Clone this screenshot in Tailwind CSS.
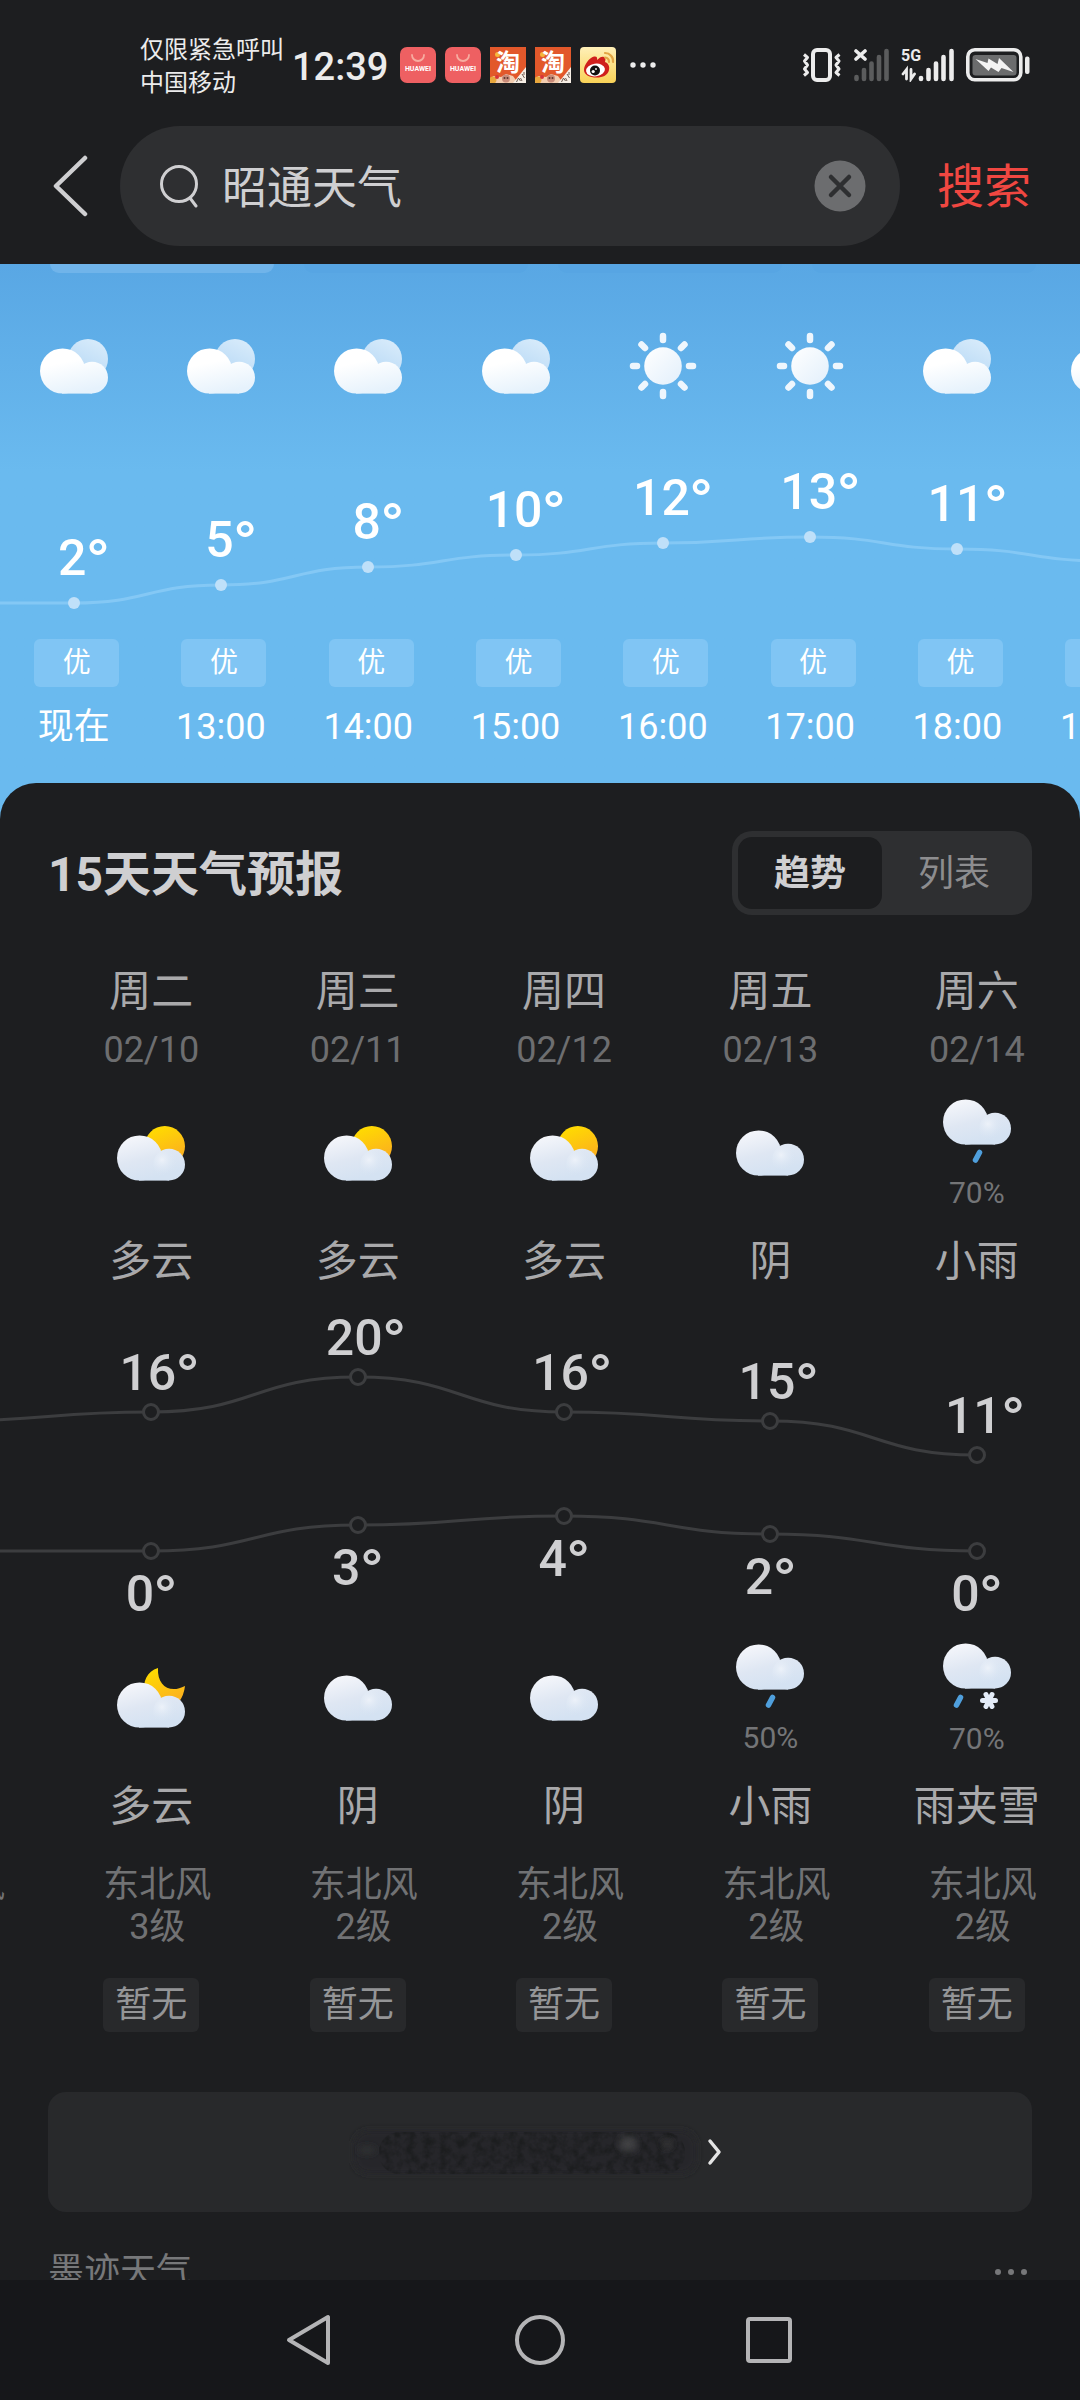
<!DOCTYPE html>
<html lang="zh-CN">
<head>
    <meta charset="UTF-8">
    <meta name="viewport" content="width=device-width, initial-scale=1.0">
    <title>昭通天气</title>
    <script src="https://cdn.jsdelivr.net/npm/@tailwindcss/browser@4"></script>
</head>
<body class="bg-[#1d1e20] text-[#cfcfd1] font-['Roboto','Noto_Sans_CJK_SC',sans-serif]">

    <!-- Icon sprite -->
    <svg class="absolute size-0" aria-hidden="true">
        <defs>
            <linearGradient id="white-cloud" gradientUnits="userSpaceOnUse" x1="20" y1="10" x2="30" y2="55">
                <stop offset="0.3" stop-color="#ffffff"/><stop offset="1" stop-color="#e6f2fc"/>
            </linearGradient>
            <linearGradient id="back-cloud" x1="0.8" y1="0" x2="0.3" y2="1">
                <stop offset="0" stop-color="#d9ecfb"/><stop offset="1" stop-color="#b4d7f5"/>
            </linearGradient>
            <linearGradient id="sun-white" x1="0" y1="0" x2="1" y2="1">
                <stop offset="0" stop-color="#ffffff"/><stop offset="1" stop-color="#e2effb"/>
            </linearGradient>
            <linearGradient id="grey-cloud" gradientUnits="userSpaceOnUse" x1="18" y1="8" x2="30" y2="54">
                <stop offset="0" stop-color="#f6f7fb"/><stop offset="0.55" stop-color="#dfe7f3"/><stop offset="1" stop-color="#d4e2f2"/>
            </linearGradient>
            <radialGradient id="cloud-glow" gradientUnits="userSpaceOnUse" cx="45" cy="34" r="16">
                <stop offset="0" stop-color="#f1f5fb" stop-opacity="0.8"/><stop offset="1" stop-color="#d6e3f2" stop-opacity="0"/>
            </radialGradient>
            <linearGradient id="sun-yellow" x1="0.3" y1="0" x2="0.7" y2="1">
                <stop offset="0" stop-color="#ffdc00"/><stop offset="1" stop-color="#fba824"/>
            </linearGradient>
        </defs>
        <symbol id="cloud-shape" viewBox="0 0 68 46">
            <g transform="translate(0 -9)" fill="url(#grey-cloud)">
                <circle cx="22.6" cy="32" r="22.6"/>
                <rect x="22" y="32" width="30" height="22.6"/>
                <circle cx="52.1" cy="38.6" r="15.9"/>
                <circle cx="52.1" cy="38.6" r="15.9" fill="url(#cloud-glow)"/>
            </g>
        </symbol>
        <symbol id="hour-cloudy" viewBox="0 0 68 55">
            <circle cx="48" cy="20" r="20" fill="url(#back-cloud)"/>
            <g fill="url(#white-cloud)">
                <circle cx="22.6" cy="32" r="22.6"/>
                <rect x="22" y="32" width="30" height="22.6"/>
                <circle cx="52.1" cy="38.6" r="15.9"/>
            </g>
        </symbol>
        <symbol id="hour-sunny" viewBox="0 0 68 68">
            <circle cx="34" cy="34" r="18.8" fill="url(#sun-white)"/>
            <g stroke="#eef6fd" stroke-width="6.5" stroke-linecap="round">
                <path d="M34 4v4M34 60v4M4 34h4M60 34h4M12.5 12.5l3.5 3.5M52 52l3.5 3.5M12.5 55.5l3.5-3.5M52 16l3.5-3.5"/>
            </g>
        </symbol>
        <symbol id="day-cloudy" viewBox="0 0 68 55">
            <circle cx="47.8" cy="20.2" r="20.2" fill="url(#sun-yellow)"/>
            <use href="#cloud-shape" x="0" y="9" width="68" height="46"/>
        </symbol>
        <symbol id="night-cloudy" viewBox="0 0 68 60">
            <path d="M41 0C30 3 25 14 28 26L46 42L62 34Q67 27 68 18C53 26 40 18 41 0Z" fill="url(#sun-yellow)"/>
            <use href="#cloud-shape" x="0" y="14" width="68" height="46"/>
        </symbol>
        <symbol id="overcast" viewBox="0 0 68 46">
            <use href="#cloud-shape" x="0" y="0" width="68" height="46"/>
        </symbol>
        <symbol id="light-rain" viewBox="0 0 68 64">
            <use href="#cloud-shape" x="0" y="0" width="68" height="46"/>
            <path d="M36.5 53.5l-4 7.5" stroke="#4f9fdc" stroke-width="5.5" stroke-linecap="round"/>
        </symbol>
        <symbol id="sleet" viewBox="0 0 68 66">
            <use href="#cloud-shape" x="0" y="0" width="68" height="46"/>
            <path d="M17.5 54.5l-4 7.5" stroke="#4f9fdc" stroke-width="5.5" stroke-linecap="round"/>
            <path d="M39.5 57.5h13M43 51.5l6 12M49 51.5l-6 12" stroke="#e4ecf8" stroke-width="5" stroke-linecap="round"/>
        </symbol>
        <symbol id="app-huawei" viewBox="0 0 36 36">
            <rect width="36" height="36" rx="7" fill="#ee6062"/>
            <path d="M12 8a6 6 0 0 0 12 0" fill="none" stroke="#f7aca0" stroke-width="1.8" stroke-linecap="round"/>
        </symbol>
        <symbol id="app-taobao" viewBox="0 0 36 36">
            <rect width="36" height="36" fill="#e2582b"/>
            <path d="M0 36l3-7 8 1 5-3 7 2 5 7z" fill="#f3cdb0"/>
            <circle cx="3" cy="33" r="3.5" fill="#e8a73c"/><circle cx="7" cy="30" r="2" fill="#d8343a"/>
            <circle cx="16" cy="31.5" r="4" fill="#c98a78"/><circle cx="14.5" cy="31" r="1" fill="#5b342c"/><circle cx="17.5" cy="31" r="1" fill="#5b342c"/>
            <path d="M23 36L36 20v16z" fill="#f7efe6"/>
            <path d="M26.5 35l2-4 2 3M30.5 31l1.5 3M32 27l2.5 4M34 25v3" stroke="#6e5a50" stroke-width="1" fill="none"/>
            <circle cx="7.5" cy="7.5" r="2.5" fill="#f6b73c"/>
        </symbol>
    </svg>

    <div class="h-screen flex flex-col">

        <!-- Status bar -->
        <div class="flex items-center pt-[34px] pl-[140px] pr-[50px] text-[#ececec]">
            <div class="text-[24px] leading-[33px] whitespace-nowrap">
                <p>仅限紧急呼叫</p>
                <p>中国移动</p>
            </div>
            <time class="ml-2 text-[38px] leading-[48px] font-medium">12:39</time>
            <div class="flex items-center gap-[9px] ml-3 pb-1">
                <svg class="size-9" viewBox="0 0 36 36" aria-label="华为应用市场">
                    <use href="#app-huawei"/>
                    <text x="18" y="24" text-anchor="middle" font-size="7" font-weight="700" fill="#fff">HUAWEI</text>
                </svg>
                <svg class="size-9" viewBox="0 0 36 36" aria-label="华为应用市场">
                    <use href="#app-huawei"/>
                    <text x="18" y="24" text-anchor="middle" font-size="7" font-weight="700" fill="#fff">HUAWEI</text>
                </svg>
                <svg class="size-9" viewBox="0 0 36 36" aria-label="淘宝">
                    <use href="#app-taobao"/>
                    <text x="18" y="24" text-anchor="middle" font-size="24" font-weight="700" fill="#fff">淘</text>
                </svg>
                <svg class="size-9" viewBox="0 0 36 36" aria-label="淘宝">
                    <use href="#app-taobao"/>
                    <text x="18" y="24" text-anchor="middle" font-size="24" font-weight="700" fill="#fff">淘</text>
                </svg>
                <svg class="size-9" viewBox="0 0 36 36" aria-label="微博">
                    <linearGradient id="weibo-bg" x1="0" y1="0" x2="0" y2="1"><stop offset="0" stop-color="#fff0b8"/><stop offset="1" stop-color="#f9d257"/></linearGradient>
                    <rect width="36" height="36" rx="4" fill="url(#weibo-bg)"/>
                    <path d="M4 23C4 18 9 11 14 9.5c3-0.5 3.5 1.5 3 3.5 3-3 5-4 7-3 2 1 1.5 3 1 5 3 1 5 4 4 8-1 5-6 7.5-12.5 7.5S4 28 4 23z" fill="#cf1f1c"/>
                    <ellipse cx="15.5" cy="23" rx="9.5" ry="6.3" fill="#fff" transform="rotate(-8 15.5 23)"/>
                    <circle cx="15" cy="23.5" r="5" fill="#111"/>
                    <circle cx="13.2" cy="24.5" r="1.6" fill="#fff"/><circle cx="16" cy="22" r="0.9" fill="#fff"/>
                    <path d="M25 6a8 8 0 0 1 8 9M25 10.5a4.5 4.5 0 0 1 4 4.5" fill="none" stroke="#e3a544" stroke-width="2.2" stroke-linecap="round"/>
                </svg>
            </div>
            <svg class="w-[26px] h-3 ml-[14px] pb-1" viewBox="0 0 26 8" fill="#ececec" aria-hidden="true">
                <circle cx="3" cy="4" r="2.7"/><circle cx="13" cy="4" r="2.7"/><circle cx="23" cy="4" r="2.7"/>
            </svg>
            <div class="flex items-center gap-3 ml-auto pb-1">
                <svg class="w-10 h-[34px]" viewBox="0 0 40 34" fill="none" stroke="#ececec" aria-label="振动">
                    <rect x="11" y="2" width="17" height="30" rx="4" stroke-width="4"/>
                    <path d="M2 6.5l3.5 3-3 3.5 3 4-3 4 3 3.5-3.5 3M37.5 6.5l-3.5 3 3 3.5-3 4 3 4-3 3.5 3.5 3" stroke-width="3" stroke-linejoin="round"/>
                </svg>
                <svg class="w-[35px] h-[34px]" viewBox="0 0 35 34" fill="none" stroke-linecap="round" aria-label="无信号">
                    <path d="M2 3l9 8M11 3l-9 8" stroke="#ececec" stroke-width="3.6"/>
                    <path d="M2.5 29v2M10 22v9M17.5 15.5v15.5M25 9v22M32.5 3v28" stroke="#5b5c5d" stroke-width="4.6"/>
                </svg>
                <svg class="w-[53px] h-[34px]" viewBox="0 0 53 34" fill="none" stroke="#ececec" stroke-linecap="round" aria-label="5G信号">
                    <text x="0" y="13" font-size="16" font-weight="700" fill="#ececec" stroke="none">5G</text>
                    <path d="M5.5 31V21.5L2 26M10 21.5V31l3.5-5" stroke-width="2.8"/>
                    <path d="M20 30v1M27.5 22v9M35 15.5v15.5M42.5 9v22M50.5 3v28" stroke-width="4.6"/>
                </svg>
                <svg class="w-[64px] h-[34px]" viewBox="0 0 64 34" aria-label="充电中">
                    <rect x="1.8" y="1.8" width="53" height="30" rx="7" fill="none" stroke="#ececec" stroke-width="3.6"/>
                    <rect x="6.5" y="7" width="44" height="20.5" rx="3" fill="#6b6c6d"/>
                    <path d="M9.5 11l12 4 1-4.5 9 5.5 1.5-6 14.5 14-12-4-3 4-7.5-4.5-2.5 3.5z" fill="#f4f4f4"/>
                    <rect x="59" y="8.5" width="4.5" height="17.5" rx="2" fill="#ececec"/>
                </svg>
            </div>
        </div>

        <!-- Search bar -->
        <form class="flex items-center pt-[26px] pb-[18px]" onsubmit="return false">
            <a href="#" aria-label="返回" class="flex justify-center w-[120px] pl-5">
                <svg class="w-[36px] h-[62px]" viewBox="0 0 36 62" fill="none" stroke="#cfcfd1" stroke-width="4.5" stroke-linecap="round" stroke-linejoin="round"><path d="M33 3L4 31l29 28"/></svg>
            </a>
            <div class="flex flex-1 items-center h-[120px] rounded-full bg-[#2e2f31] pl-10 pr-[34px]">
                <svg class="w-[38px] h-[44px] shrink-0" viewBox="0 0 38 44" fill="none" stroke="#cfcfd1" stroke-width="3" stroke-linecap="round" aria-hidden="true"><circle cx="19" cy="20" r="17.5"/><path d="M30 34l6 8"/></svg>
                <label for="q" class="sr-only">搜索</label>
                <input id="q" type="text" value="昭通天气" class="flex-1 min-w-0 ml-6 pt-[6px] text-[45px] leading-[60px] text-[#cfcfd1] bg-transparent outline-none">
                <button type="reset" aria-label="清除" class="shrink-0">
                    <svg class="size-[52px]" viewBox="0 0 52 52"><circle cx="26" cy="26" r="25.5" fill="#6c6d6f"/><path d="M17 17l18 18M35 17L17 35" stroke="#2e2f31" stroke-width="4.5" stroke-linecap="round"/></svg>
                </button>
            </div>
            <button type="submit" class="w-[180px] pr-3 pt-[2px] text-[47px] leading-[60px] text-[#f04741]">搜索</button>
        </form>

        <main class="flex-1 min-h-0 overflow-y-auto [scrollbar-width:none] bg-[#6abaef]">

            <!-- Hourly forecast -->
            <section class="overflow-hidden bg-linear-to-b from-[#59a7e4] to-[#6abaef] to-40% text-white">
                <div class="flex gap-[30px] h-[9px] px-[50px]">
                    <div class="w-[224px] shrink-0 rounded-b-xl bg-[#70b4ea]"></div>
                    <div class="w-[224px] shrink-0 rounded-b-xl bg-[#57a5e3]"></div>
                    <div class="w-[224px] shrink-0 rounded-b-xl bg-[#57a5e3]"></div>
                    <div class="w-[224px] shrink-0 rounded-b-xl bg-[#57a5e3]"></div>
                </div>
                <div class="relative">
                    <svg class="absolute top-[186px] left-0 w-full h-[180px]" viewBox="0 0 1080 180" preserveAspectRatio="none" fill="none" aria-hidden="true">
                        <path id="hour-line" stroke="#84c8f5" stroke-width="3"/>
                    </svg>
                    <ul id="hours" class="relative flex pb-8"></ul>
                </div>
            </section>

            <!-- 15-day forecast -->
            <section class="rounded-t-[36px] bg-[#1d1e20] overflow-hidden">
                <div class="flex items-center justify-between pt-12 px-12">
                    <h2 class="pt-1 text-[48px] leading-[60px] font-bold">15天天气预报</h2>
                    <div class="flex p-[6px] rounded-[20px] bg-[#2e2f31] text-[36px] leading-[70px]">
                        <button type="button" class="w-36 pt-[2px] rounded-[14px] bg-[#1c1d1f] font-bold">趋势</button>
                        <button type="button" class="w-36 pt-[2px] text-[#8d8d8f]">列表</button>
                    </div>
                </div>

                <div class="relative mt-[52px]">
                    <svg class="absolute top-[318px] left-0 w-full h-[333px]" viewBox="0 0 1080 333" preserveAspectRatio="none" fill="none" stroke="#3c3d3f" stroke-width="3" aria-hidden="true">
                        <path id="high-line"/>
                        <path id="low-line"/>
                    </svg>
                    <ul id="days" class="relative flex justify-end"></ul>
                </div>

                <div class="px-12 mt-[60px]">
                    <button type="button" aria-label="查看更多天气" class="flex items-center justify-center w-full h-[120px] pr-2 rounded-[18px] bg-[#28292b]">
                        <svg class="w-[356px] h-[60px]" viewBox="0 0 356 60" aria-hidden="true">
                            <filter id="soft" x="-10%" y="-30%" width="120%" height="160%"><feGaussianBlur stdDeviation="3"/></filter>
                            <filter id="speckle" x="0" y="0" width="100%" height="100%" color-interpolation-filters="sRGB">
                                <feTurbulence type="fractalNoise" baseFrequency="0.12" numOctaves="3" seed="4"/>
                                <feColorMatrix values="0 0 0 0 0.11  0 0 0 0 0.115  0 0 0 0 0.12  0 0 0 2.4 -0.9"/>
                                <feComposite in2="SourceGraphic" operator="in"/>
                            </filter>
                            <rect x="4" y="8" width="344" height="44" rx="16" fill="#262729" filter="url(#soft)"/>
                            <rect x="30" y="10" width="306" height="42" rx="20" fill="#222325" filter="url(#speckle)"/>
                            <g filter="url(#soft)">
                                <ellipse cx="279" cy="22" rx="9" ry="8" fill="#404143"/>
                                <ellipse cx="318" cy="22" rx="6" ry="5" fill="#303133"/>
                                <ellipse cx="18" cy="28" rx="9" ry="4" fill="#2f3032"/>
                            </g>
                        </svg>
                        <svg class="w-4 h-7 ml-[2px]" viewBox="0 0 16 28" fill="none" stroke="#e4e4e4" stroke-width="3.5" stroke-linecap="round" stroke-linejoin="round" aria-hidden="true"><path d="M3 3l9 11-9 11"/></svg>
                    </button>
                </div>

                <div class="flex items-center justify-between px-12 pt-9 pb-10 text-[#77787a]">
                    <p class="text-[36px] leading-[48px]">墨迹天气</p>
                    <button type="button" aria-label="更多" class="pr-1">
                        <svg class="w-[34px] h-2" viewBox="0 0 34 8" fill="#77787a"><circle cx="4" cy="4" r="3"/><circle cx="17" cy="4" r="3"/><circle cx="30" cy="4" r="3"/></svg>
                    </button>
                </div>
            </section>
        </main>

        <!-- System navigation -->
        <nav class="flex shrink-0 items-center justify-center h-[120px] bg-[#16171a]">
            <button type="button" aria-label="后退" class="flex justify-center w-[230px]">
                <svg class="size-[52px]" viewBox="0 0 52 52" fill="none" stroke="#b4b4b6" stroke-width="4" stroke-linejoin="round"><path d="M44 3v46L5 26z"/></svg>
            </button>
            <button type="button" aria-label="主屏幕" class="flex justify-center w-[230px]">
                <svg class="size-[52px]" viewBox="0 0 52 52" fill="none" stroke="#b4b4b6" stroke-width="4"><circle cx="26" cy="26" r="23"/></svg>
            </button>
            <button type="button" aria-label="最近任务" class="flex justify-center w-[230px]">
                <svg class="size-[52px]" viewBox="0 0 52 52" fill="none" stroke="#b4b4b6" stroke-width="4"><rect x="4" y="5" width="42" height="42" rx="2"/></svg>
            </button>
        </nav>
    </div>

    <script>
        const hours = [
            { time: '现在', temp: 2, icon: 'cloudy' },
            { time: '13:00', temp: 5, icon: 'cloudy' },
            { time: '14:00', temp: 8, icon: 'cloudy' },
            { time: '15:00', temp: 10, icon: 'cloudy' },
            { time: '16:00', temp: 12, icon: 'sunny' },
            { time: '17:00', temp: 13, icon: 'sunny' },
            { time: '18:00', temp: 11, icon: 'cloudy' },
            { time: '19:00', temp: 9, icon: 'cloudy' },
        ];

        const days = [
            { name: '周一', date: '02/09', day: ['day-cloudy', '多云'], high: 15, low: 0, night: ['night-cloudy', '多云'], wind: '2级' },
            { name: '周二', date: '02/10', day: ['day-cloudy', '多云'], high: 16, low: 0, night: ['night-cloudy', '多云'], wind: '3级' },
            { name: '周三', date: '02/11', day: ['day-cloudy', '多云'], high: 20, low: 3, night: ['overcast', '阴'], wind: '2级' },
            { name: '周四', date: '02/12', day: ['day-cloudy', '多云'], high: 16, low: 4, night: ['overcast', '阴'], wind: '2级' },
            { name: '周五', date: '02/13', day: ['overcast', '阴'], high: 15, low: 2, night: ['light-rain', '小雨', '50%'], wind: '2级' },
            { name: '周六', date: '02/14', day: ['light-rain', '小雨', '70%'], high: 11, low: 0, night: ['sleet', '雨夹雪', '70%'], wind: '2级' },
        ];

        const iconSizes = {
            'day-cloudy': 'w-[68px] h-[55px]',
            'night-cloudy': 'w-[68px] h-[60px]',
            'overcast': 'w-[68px] h-[46px]',
            'light-rain': 'w-[68px] h-[64px]',
            'sleet': 'w-[68px] h-[66px]',
        };

        const hourY = t => 156 - 6 * t;
        const dayY = t => Math.round(266 - 8.7 * t);
        const degree = `<span class="font-['Inter'] leading-[0]">°</span>`;

        // Smooth line with a flat tangent at every point
        function curve(points) {
            return points.map(([x, y], i) => {
                if (i === 0) return `M${x} ${y}`;
                const [px, py] = points[i - 1];
                const mx = (x + px) / 2;
                return `C${mx} ${py} ${mx} ${y} ${x} ${y}`;
            }).join('');
        }

        document.getElementById('hours').innerHTML = hours.map(h => `
            <li class="flex flex-col items-center w-[13.64%] shrink-0">
                <div class="flex items-center h-[186px]">
                    ${h.icon === 'sunny'
                        ? '<svg class="size-[68px]"><use href="#hour-sunny"/></svg>'
                        : '<svg class="w-[68px] h-[55px]"><use href="#hour-cloudy"/></svg>'}
                </div>
                <div class="relative w-full h-[180px]">
                    <p class="absolute inset-x-0 pl-5 text-center text-[50px] leading-[50px] font-medium" style="top:${hourY(h.temp) - 70}px">${h.temp}${degree}</p>
                    <span class="absolute left-1/2 -translate-1/2 size-3 rounded-full bg-[#bfe0f9]" style="top:${hourY(h.temp)}px"></span>
                </div>
                <p class="w-[85px] ml-[6px] rounded-md bg-[#80c5f4] text-center text-[28px] leading-[48px]">优</p>
                <p class="mt-4 text-[36px] leading-[48px]">${h.time}</p>
            </li>`).join('');

        const condition = ([icon, , chance]) => `
                <div class="flex flex-col items-center justify-center h-[156px]">
                    <svg class="${iconSizes[icon]}"><use href="#${icon}"/></svg>
                    ${chance ? `<p class="mt-4 text-[30px] leading-[28px] text-[#747577]">${chance}</p>` : ''}
                </div>`;

        document.getElementById('days').innerHTML = days.map(d => `
            <li class="flex flex-col items-center w-[19.11%] shrink-0 whitespace-nowrap">
                <p class="text-[42px] leading-[50px] text-[#a9a9ab]">${d.name}</p>
                <p class="mt-[10px] mb-[2px] text-[36px] leading-[46px] text-[#6d6e70]">${d.date}</p>
                ${condition(d.day)}
                <p class="mt-2 text-[42px] leading-[46px] text-[#a9a9ab]">${d.day[1]}</p>
                <div class="relative w-full h-[335px] text-[50px] leading-[50px] font-medium text-center">
                    <p class="absolute inset-x-0 pl-4" style="top:${dayY(d.high) - 64}px">${d.high}${degree}</p>
                    <span class="absolute left-1/2 -translate-1/2 size-[18px] rounded-full border-3 border-[#3c3d3f] bg-[#1d1e20]" style="top:${dayY(d.high)}px"></span>
                    <span class="absolute left-1/2 -translate-1/2 size-[18px] rounded-full border-3 border-[#3c3d3f] bg-[#1d1e20]" style="top:${dayY(d.low)}px"></span>
                    <p class="absolute inset-x-0" style="top:${dayY(d.low) + 18}px">${d.low}${degree}</p>
                </div>
                ${condition(d.night)}
                <p class="mt-2 text-[42px] leading-[46px] text-[#a9a9ab]">${d.night[1]}</p>
                <div class="mt-[34px] pl-3 text-center text-[36px] leading-[42px] text-[#717274]">
                    <p>东北风</p>
                    <p>${d.wind}</p>
                </div>
                <p class="mt-[30px] px-3 rounded-md bg-[#28292b] text-[36px] leading-[54px] text-[#949597]">暂无</p>
            </li>`).join('');

        document.getElementById('hour-line').setAttribute('d',
            curve([[-74, hourY(2)], ...hours.map((h, i) => [74 + 147.3 * i, hourY(h.temp)])]));
        document.getElementById('high-line').setAttribute('d',
            curve(days.map((d, i) => [206.4 * i - 55.2, dayY(d.high)])));
        document.getElementById('low-line').setAttribute('d',
            curve(days.map((d, i) => [206.4 * i - 55.2, dayY(d.low)])));
    </script>
</body>
</html>
